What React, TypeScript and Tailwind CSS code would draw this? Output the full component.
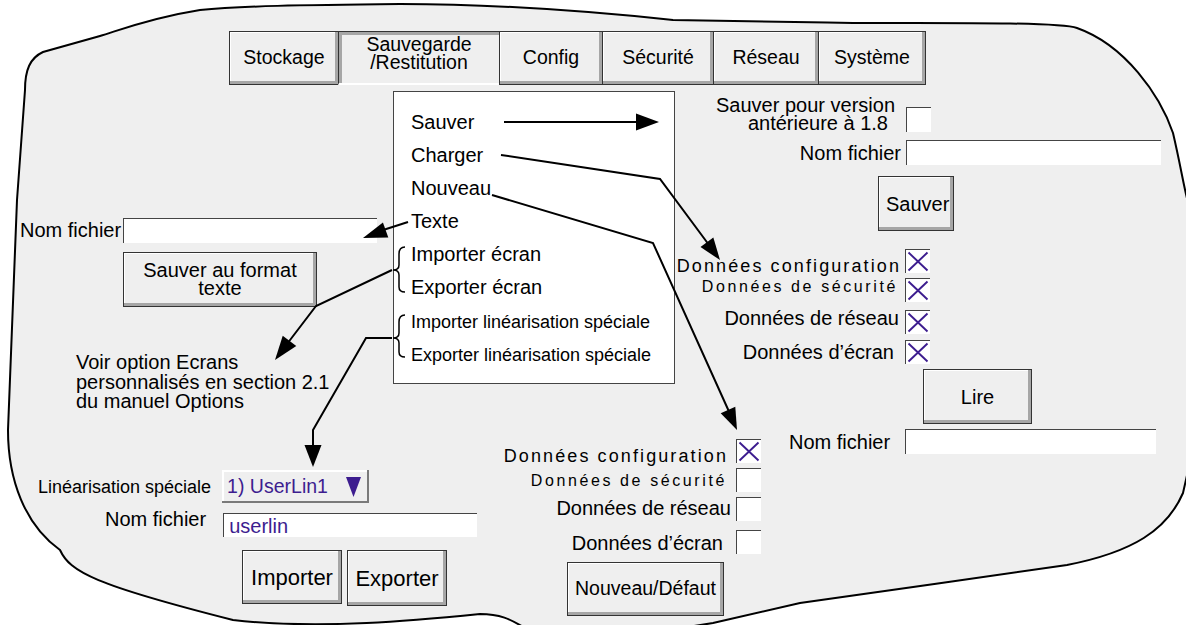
import React from 'react';

const PURPLE = '#3d1d8f';

// arrowhead polygon pointing at (tx,ty), coming from (fx,fy)
function head(tx: number, ty: number, fx: number, fy: number, len = 20, hw = 8) {
  const dx = tx - fx;
  const dy = ty - fy;
  const d = Math.hypot(dx, dy);
  const ux = dx / d;
  const uy = dy / d;
  const bx = tx - ux * len;
  const by = ty - uy * len;
  return `${tx},${ty} ${bx - uy * hw},${by + ux * hw} ${bx + uy * hw},${by - ux * hw}`;
}

const bevel = 'border border-[#333] bg-[#efefef] shadow-[inset_-3px_-3px_0_#a6a6a6,inset_1px_1px_0_#ffffff]';

const Btn = ({ className = '', children }: { className?: string; children: React.ReactNode }) => (
  <div className={`flex shrink-0 items-center justify-center text-center text-black ${bevel} ${className}`}>{children}</div>
);

const Field = ({ className = '', children }: { className?: string; children?: React.ReactNode }) => (
  <div className={`shrink-0 border-l border-t border-[#444] bg-white ${className}`}>{children}</div>
);

const Check = ({ on = false, className = '' }: { on?: boolean; className?: string }) => (
  <div className={`h-[24px] w-[25px] shrink-0 border-l border-t border-[#444] bg-white ${className}`}>
    {on && (
      <svg width="24" height="23" viewBox="0 0 24 23">
        <path d="M2.5 2.5 L21.5 20.5 M21.5 2.5 L2.5 20.5" stroke={PURPLE} strokeWidth="1.9" fill="none" />
      </svg>
    )}
  </div>
);

type Row = { label: string; on: boolean; row: string; text: string; box: string };

const CheckRows = ({ rows }: { rows: Row[] }) => (
  <>
    {rows.map((r) => (
      <div key={r.label} className={`flex items-start ${r.row}`}>
        <span className={r.text}>{r.label}</span>
        <Check on={r.on} className={r.box} />
      </div>
    ))}
  </>
);

const tabs = [
  { label: 'Stockage', w: 'w-[110px]' },
  { label: 'Sauvegarde\n/Restitution', w: 'w-[162px]', active: true },
  { label: 'Config', w: 'w-[104px]' },
  { label: 'Sécurité', w: 'w-[112px]' },
  { label: 'Réseau', w: 'w-[106px]' },
  { label: 'Système', w: 'w-[108px]' },
];

const big = 'text-[18px] leading-[18px] tracking-[2.1px]';
const small = 'text-[16px] leading-[16px] tracking-[2.6px]';
const norm = 'text-[20px] leading-[20px]';

const rightRows: Row[] = [
  { label: 'Données configuration', on: true, row: 'gap-[4px]', text: `mt-[8px] ${big}`, box: '' },
  { label: 'Données de sécurité', on: true, row: 'mt-[3px] gap-[7px]', text: `mt-[1px] ${small}`, box: '' },
  { label: 'Données de réseau', on: true, row: 'mt-[6px] gap-[6px]', text: norm, box: 'mt-[2px]' },
  { label: 'Données d’écran', on: true, row: 'mt-[6px] gap-[11px]', text: `mt-[2px] ${norm}`, box: '' },
];

const bottomRows: Row[] = [
  { label: 'Données configuration', on: true, row: 'gap-[8px]', text: `mt-[8px] ${big}`, box: '' },
  { label: 'Données de sécurité', on: false, row: 'mt-[3px] gap-[9px]', text: `mt-[5px] ${small}`, box: '' },
  { label: 'Données de réseau', on: false, row: 'mt-[5px] gap-[5px]', text: `mt-[1px] ${norm}`, box: '' },
  { label: 'Données d’écran', on: false, row: 'mt-[9px] gap-[13px]', text: `mt-[3px] ${norm}`, box: '' },
];

const App: React.FC = () => {
  return (
    <div className="relative h-[625px] w-[1186px] overflow-hidden bg-white font-['Liberation_Sans',Arial,Helvetica,sans-serif] text-black">
      {/* screen outline */}
      <svg className="absolute inset-0" width="1186" height="625" viewBox="0 0 1186 625">
        <path
          d="M43 52 C30 58 25 70 25 90 L17 200 L8 430 C8 480 25 525 60 550 C70 572 95 585 233 620 C320 630 420 620 480 614 C500 614 510 619 525 628 C580 640 660 632 713 623 L800 603 C860 594 1000 575 1067 565 C1133 552 1167 530 1183 493 L1195 440 L1195 220 C1186 205 1184 180 1173 133 C1160 95 1125 45 1077 28 C1060 22 950 23 853 23 C780 22 700 20 673 20 C560 8 460 4 400 4 C300 5 240 6 200 10 C150 18 120 30 100 36 Z"
          fill="#efefef"
          stroke="#000"
          strokeWidth="2"
        />
      </svg>

      {/* tab bar */}
      <div className="absolute left-[229px] top-[31px] flex h-[54px]">
        {tabs.map((t, i) => (
          <div
            key={t.label}
            className={`flex h-full items-center justify-center whitespace-pre-line border border-[#333] bg-[#efefef] text-center text-[19.5px] ${
              i > 0 ? '-ml-px' : ''
            } ${
              t.active
                ? 'border-b-2 border-b-white pb-[8px] leading-[17.5px] shadow-[inset_3px_3px_0_#a6a6a6]'
                : 'leading-none shadow-[inset_-3px_-3px_0_#a6a6a6,inset_1px_1px_0_#ffffff]'
            } ${t.w}`}
          >
            {t.label}
          </div>
        ))}
      </div>

      {/* Sauvegarde/Restitution menu */}
      <div className="absolute left-[393px] top-[91px] flex h-[293px] w-[282px] flex-col border border-[#444] bg-white pl-[17px] pt-[14px] text-[20px] leading-[33px]">
        <span>Sauver</span>
        <span>Charger</span>
        <span>Nouveau</span>
        <span>Texte</span>
        <span>Importer écran</span>
        <span>Exporter écran</span>
        <span className="mt-[2px] text-[18px]">Importer linéarisation spéciale</span>
        <span className="text-[18px]">Exporter linéarisation spéciale</span>
      </div>

      {/* Texte */}
      <div className="absolute left-[20px] top-[218px] flex flex-col">
        <div className="flex items-center">
          <span className="text-[20px] leading-[25px]">Nom fichier</span>
          <Field className="ml-[2px] h-[25px] w-[254px]" />
        </div>
        <Btn className="ml-[103px] mt-[9px] h-[55px] w-[194px] pb-[2px] text-[20px] leading-[18px]">
          Sauver au format
          <br />
          texte
        </Btn>
      </div>

      <p className="absolute left-[76px] top-[353px] text-[20px] leading-[19.5px]">
        Voir option Ecrans
        <br />
        personnalisés en section 2.1
        <br />
        du manuel Options
      </p>

      {/* Linéarisation spéciale */}
      <div className="absolute left-[38px] top-[470px] flex flex-col">
        <div className="flex items-center gap-[11px]">
          <span className="text-[18px] leading-[22px]">Linéarisation spéciale</span>
          <div className="flex h-[33px] w-[147px] items-center justify-between bg-[#efefef] pl-[5px] pr-[8px] shadow-[inset_-2px_-2px_0_#7a7a7a,inset_2px_2px_0_#ffffff]">
            <span className="text-[19.5px] text-[#3d1d8f]">1) UserLin1</span>
            <svg width="15" height="20" viewBox="0 0 15 20">
              <polygon points="0,0 15,0 7.5,20" fill={PURPLE} />
            </svg>
          </div>
        </div>
        <div className="ml-[67px] mt-[4px] flex items-start gap-[17px]">
          <span className="text-[20px] leading-[24px]">Nom fichier</span>
          <Field className="mt-[6px] flex h-[24px] w-[254px] items-center pl-[5px] text-[20px] leading-none text-[#3d1d8f]">
            userlin
          </Field>
        </div>
        <div className="ml-[204px] mt-[13px] flex items-start gap-[5px]">
          <Btn className="h-[54px] w-[100px] text-[22px]">Importer</Btn>
          <Btn className="h-[56px] w-[100px] text-[22px]">Exporter</Btn>
        </div>
      </div>

      {/* Sauver */}
      <div className="absolute left-[700px] top-[96px] flex flex-col">
        <div className="flex items-start">
          <div className="w-[195px] text-right text-[20px] leading-[18px]">
            Sauver pour version
            <br />
            <span className="mr-[7px]">antérieure à 1.8</span>
          </div>
          <Field className="ml-[11px] mt-[11px] h-[25px] w-[25px]" />
        </div>
        <div className="mt-[8px] flex items-center">
          <span className="w-[201px] text-right text-[20px] leading-[24px]">Nom fichier</span>
          <Field className="ml-[5px] h-[25px] w-[255px]" />
        </div>
        <Btn className="ml-[178px] mt-[11px] h-[55px] w-[76px] justify-start pl-[7px] text-[20px]">Sauver</Btn>
      </div>

      {/* Charger */}
      <div className="absolute right-[256px] top-[249px] flex flex-col items-end">
        <CheckRows rows={rightRows} />
      </div>
      <div className="absolute left-[789px] top-[369px] flex flex-col">
        <Btn className="ml-[134px] h-[55px] w-[109px] text-[20px]">Lire</Btn>
        <div className="mt-[5px] flex items-center gap-[15px]">
          <span className="text-[20px] leading-[24px]">Nom fichier</span>
          <Field className="h-[25px] w-[251px]" />
        </div>
      </div>

      {/* Nouveau */}
      <div className="absolute right-[425px] top-[439px] flex flex-col items-end">
        <CheckRows rows={bottomRows} />
        <Btn className="mr-[37px] mt-[8px] h-[54px] w-[157px] text-[19.5px]">Nouveau/Défaut</Btn>
      </div>

      {/* arrows and braces */}
      <svg className="pointer-events-none absolute inset-0" width="1186" height="625" viewBox="0 0 1186 625">
        <g stroke="#000" strokeWidth="2" fill="none">
          <line x1="504" y1="122" x2="640" y2="122" />
          <polyline points="501,155 660,179 712,249" />
          <polyline points="492,195 653,243 731,416" />
          <line x1="408" y1="222" x2="380" y2="231" />
          <polyline points="392,270 316,306 287,344" />
          <polyline points="392,338 366,338 313,430 313,450" />
        </g>
        <g stroke="#000" strokeWidth="1.5" fill="none">
          <path d="M405 247 C400 247 399 250 399 254 L399 265 C399 268 397 270 393 270 C397 270 399 272 399 275 L399 287 C399 290 400 292 405 292" />
          <path d="M405 315 C400 315 399 318 399 322 L399 333 C399 336 397 338 393 338 C397 338 399 340 399 343 L399 352 C399 355 400 357 405 357" />
        </g>
        <g fill="#000">
          <polygon points={head(659, 122, 504, 122, 23, 8.5)} />
          <polygon points={head(720, 260, 660, 179, 22, 8)} />
          <polygon points={head(737, 430, 653, 243, 22, 8)} />
          <polygon points={head(363, 238, 408, 222, 24, 8)} />
          <polygon points={head(275, 360, 316, 306, 24, 8.5)} />
          <polygon points={head(313, 467, 313, 430, 22, 8.5)} />
        </g>
      </svg>
    </div>
  );
};

export default App;
